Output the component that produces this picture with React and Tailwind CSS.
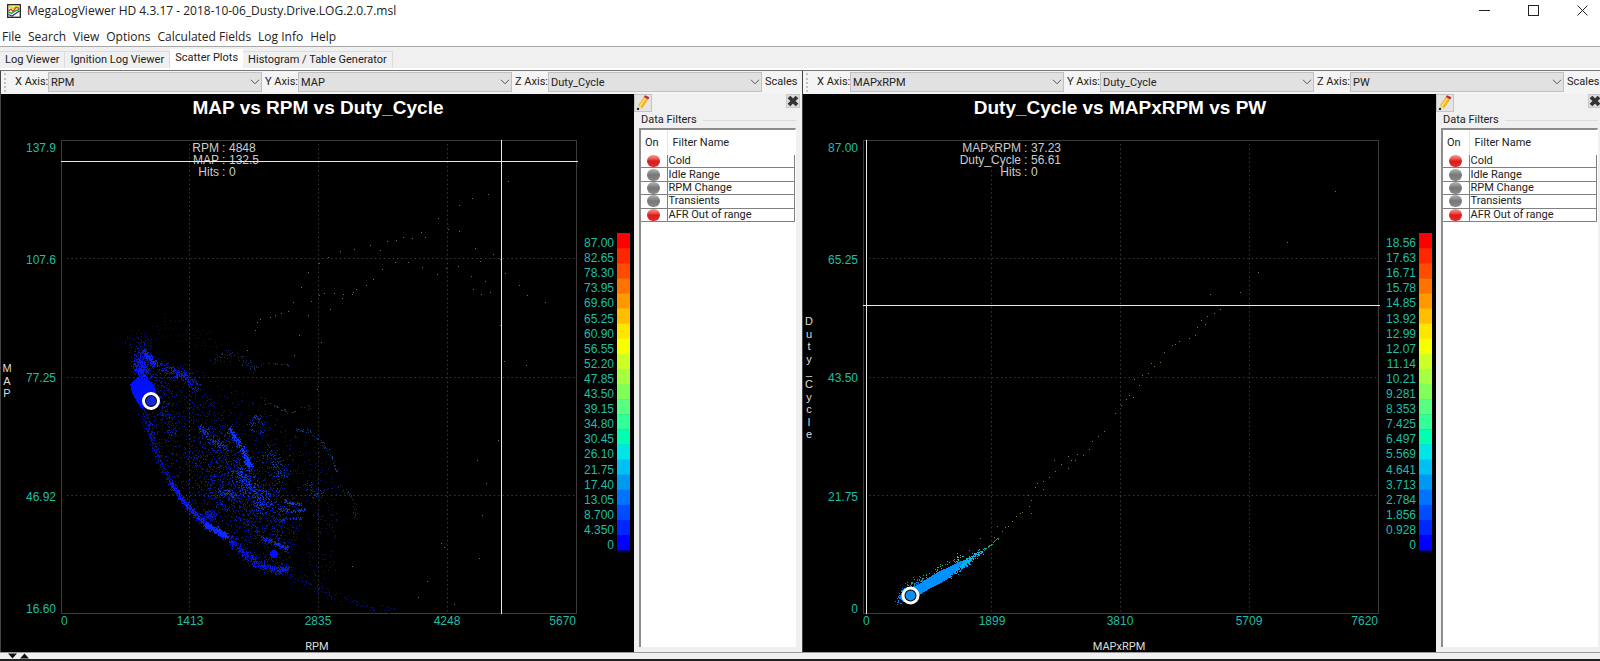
import React from "react";

const menus = ["File", "Search", "View", "Options", "Calculated Fields", "Log Info", "Help"];
const tabs = ["Log Viewer", "Ignition Log Viewer", "Scatter Plots", "Histogram / Table Generator"];

const filters = [
  { name: "Cold", on: true },
  { name: "Idle Range", on: false },
  { name: "RPM Change", on: false },
  { name: "Transients", on: false },
  { name: "AFR Out of range", on: true },
];

const scaleColors = [
  "#ff0000", "#ff2600", "#ff4c00", "#ff7300", "#ff9900", "#ffbf00", "#ffe600",
  "#f7ff00", "#ccff26", "#a6ff40", "#80ff59", "#59ff80", "#33ff99", "#00ffb3",
  "#00e6e6", "#00bff2", "#0099f2", "#0073ff", "#004cff", "#0026ff", "#0000ff",
];

/* ---------- point generation ---------- */

const makeRandom = (seed) => () => {
  seed = (seed * 1664525 + 1013904223) % 4294967296;
  return seed / 4294967296;
};

const spread = (rnd) => rnd() + rnd() + rnd() - 1.5;

const dot = (x, y) => `M${Math.round(x)} ${Math.round(y)}h1v1h-1z`;

// points scattered around a polyline
const trail = (rnd, pts, count, width) => {
  const out = [];
  const lengths = pts.slice(1).map((p, i) => Math.hypot(p[0] - pts[i][0], p[1] - pts[i][1]));
  const total = lengths.reduce((a, b) => a + b, 0);
  for (let n = 0; n < count; n++) {
    let d = rnd() * total;
    let i = 0;
    while (i < lengths.length - 1 && d > lengths[i]) d -= lengths[i++];
    const t = d / lengths[i];
    const x = pts[i][0] + (pts[i + 1][0] - pts[i][0]) * t;
    const y = pts[i][1] + (pts[i + 1][1] - pts[i][1]) * t;
    out.push(dot(x + spread(rnd) * width, y + spread(rnd) * width));
  }
  return out.join("");
};

const inside = (x, y, poly) => {
  let hit = false;
  for (let i = 0, j = poly.length - 1; i < poly.length; j = i++) {
    const [xi, yi] = poly[i];
    const [xj, yj] = poly[j];
    if (yi > y !== yj > y && x < ((xj - xi) * (y - yi)) / (yj - yi) + xi) hit = !hit;
  }
  return hit;
};

const fill = (rnd, poly, count) => {
  const xs = poly.map((p) => p[0]);
  const ys = poly.map((p) => p[1]);
  const [x0, x1] = [Math.min(...xs), Math.max(...xs)];
  const [y0, y1] = [Math.min(...ys), Math.max(...ys)];
  const out = [];
  while (out.length < count) {
    const x = x0 + rnd() * (x1 - x0);
    const y = y0 + rnd() * (y1 - y0);
    if (inside(x, y, poly)) out.push(dot(x, y));
  }
  return out.join("");
};

/* ---------- MAP vs RPM ---------- */

const r1 = makeRandom(7);

const mapCloud = [
  // body of the cloud
  ["#081890", fill(r1, [[147, 272], [185, 276], [207, 304], [232, 335], [262, 366], [284, 392], [305, 412], [297, 440], [285, 472], [255, 466], [212, 428], [186, 404], [166, 372], [144, 320]], 1300)],
  ["#0a24b4", fill(r1, [[200, 330], [232, 337], [262, 380], [290, 425], [278, 455], [230, 425], [190, 385]], 500)],
  ["#08186e", fill(r1, [[180, 268], [230, 290], [270, 320], [318, 352], [338, 400], [330, 440], [300, 400], [250, 350], [210, 310]], 300)],
  ["#0b1c90", trail(r1, [[142, 250], [148, 275], [160, 300], [164, 325], [175, 340]], 220, 9)],
  ["#0a18a0", trail(r1, [[205, 372], [225, 380], [240, 400], [250, 430]], 220, 18)],
  // idle area
  ["#0818e0", trail(r1, [[138, 256], [138, 266], [140, 280]], 200, 8)],
  ["#0818f0", trail(r1, [[138, 270], [141, 275], [141, 284]], 200, 6)],
  ["#0820ff", trail(r1, [[143, 257], [147, 263], [154, 270]], 150, 3)],
  ["#060e80", trail(r1, [[126, 246], [138, 242], [150, 252]], 50, 8)],
  ["#0c20d0", trail(r1, [[150, 268], [175, 278], [190, 285]], 150, 6)],
  ["#0a1cc0", trail(r1, [[172, 275], [186, 284], [198, 298]], 110, 5)],
  // lower edge
  ["#0612b0", trail(r1, [[142, 318], [150, 342], [159, 366], [169, 388], [182, 407], [196, 422], [209, 433]], 480, 4)],
  ["#0a1cff", trail(r1, [[169, 388], [182, 407], [196, 422], [209, 433], [226, 443]], 380, 3)],
  ["#0814e0", trail(r1, [[226, 443], [243, 458], [259, 471], [274, 476], [286, 476]], 420, 5)],
  ["#0c28ff", trail(r1, [[205, 431], [214, 435], [226, 442]], 320, 3)],
  ["#0814b0", trail(r1, [[206, 420], [212, 422]], 130, 5)],
  ["#0a1080", trail(r1, [[286, 478], [312, 492], [340, 505], [362, 512], [392, 516]], 110, 5)],
  // streaks
  ["#0a38ff", trail(r1, [[228, 334], [240, 353], [249, 373]], 190, 3)],
  ["#0a38ff", trail(r1, [[245, 364], [249, 372]], 60, 3)],
  ["#0a30d0", trail(r1, [[198, 332], [212, 346], [226, 355]], 110, 4)],
  ["#0a34e8", trail(r1, [[236, 376], [246, 390], [266, 412]], 280, 9)],
  ["#0c38c0", trail(r1, [[216, 398], [226, 398], [236, 402]], 60, 4)],
  ["#0c3ce0", trail(r1, [[283, 406], [291, 409], [300, 410]], 50, 2)],
  ["#0c3cc0", trail(r1, [[278, 415], [294, 417], [304, 415]], 50, 2)],
  ["#0a28d0", trail(r1, [[278, 428], [285, 424], [300, 424]], 45, 1)],
  ["#0a28f0", trail(r1, [[262, 444], [272, 448], [286, 454]], 90, 2)],
  ["#0a1ed8", trail(r1, [[262, 472], [275, 474], [288, 474]], 90, 3)],
  ["#0c34a8", trail(r1, [[250, 335], [254, 322], [259, 325], [262, 338]], 50, 4)],
  ["#0c349c", trail(r1, [[264, 358], [276, 370], [280, 385], [272, 390]], 140, 10)],
  // outer arcs
  ["#103c80", trail(r1, [[295, 336], [309, 337], [321, 348], [330, 362], [336, 378]], 64, 2)],
  ["#0e3070", trail(r1, [[336, 391], [347, 398], [354, 411], [354, 424]], 38, 3)],
  ["#103c84", trail(r1, [[304, 392], [308, 390], [314, 402], [322, 398]], 40, 5)],
  ["#142c60", trail(r1, [[209, 268], [226, 258], [240, 266], [255, 275]], 60, 5)],
  ["#142c60", trail(r1, [[252, 274], [266, 269], [289, 271]], 24, 1)],
  ["#1c3c50", trail(r1, [[259, 303], [276, 313], [290, 319], [299, 314], [310, 312]], 34, 2)],
  ["#141c60", fill(r1, [[310, 400], [334, 405], [338, 470], [330, 495], [300, 485]], 70)],
  ["#10163c", trail(r1, [[150, 245], [170, 228], [200, 246], [230, 262]], 50, 12)],
];

const mapStrays = [
  [288, 11], [268, 24], [252, 28], [239, 35], [218, 48], [201, 62], [205, 67], [192, 68], [183, 67], [176, 70],
  [167, 71], [160, 80], [150, 75], [134, 79], [120, 81], [108, 87], [99, 93], [228, 59], [239, 61], [255, 78],
  [260, 91], [273, 84], [280, 89], [285, 103], [299, 115], [307, 125], [325, 132], [251, 106], [265, 111],
  [253, 119], [261, 124], [270, 122], [238, 96], [226, 98], [217, 104], [202, 97], [188, 92], [175, 92],
  [162, 99], [153, 109], [146, 115], [136, 119], [133, 122], [132, 124], [123, 124], [114, 123], [104, 123],
  [99, 125], [122, 128], [110, 139], [91, 131], [88, 145], [81, 117], [88, 102], [73, 132], [68, 141],
  [61, 143], [55, 145], [50, 147], [40, 149], [37, 152], [35, 160], [79, 165], [74, 185], [27, 180],
  [101, 172], [97, 219], [280, 155], [284, 191], [306, 195], [278, 270], [257, 290], [266, 313], [262, 345],
  [221, 373], [224, 377], [259, 388], [207, 411], [198, 427], [234, 434], [132, 396],
];

/* ---------- Duty_Cycle vs MAPxRPM ---------- */

const r2 = makeRandom(31);

const dutyCloud = [
  ["#0878f0", trail(r2, [[96, 506], [104, 496], [118, 488]], 200, 5)],
  ["#00a0fc", trail(r2, [[130, 487], [150, 476], [163, 469]], 400, 4)],
  ["#00b8e8", trail(r2, [[158, 471], [165, 466], [178, 457]], 170, 3)],
  ["#20a878", trail(r2, [[108, 489], [128, 479], [142, 471], [154, 464]], 45, 3)],
  ["#18c8a0", trail(r2, [[150, 468], [155, 463], [163, 463]], 18, 3)],
  ["#20a060", trail(r2, [[178, 458], [188, 450], [196, 443]], 28, 1)],
];

const dutyStrays = [
  [177, 444], [166, 456], [191, 443], [199, 437], [202, 433], [205, 432], [194, 432], [209, 427], [213, 422],
  [217, 419], [219, 418], [226, 412], [228, 419], [225, 401], [228, 406], [240, 387], [234, 389], [232, 393],
  [240, 395], [246, 383], [252, 377], [258, 370], [265, 374], [251, 366], [272, 366], [274, 360], [265, 362],
  [280, 361], [286, 355], [289, 347], [295, 342], [301, 337], [312, 319], [318, 311], [323, 305], [330, 303],
  [336, 291], [339, 281], [345, 279], [351, 272], [357, 268], [361, 258], [369, 251], [376, 247], [392, 241],
  [394, 233], [402, 230], [404, 222], [411, 219], [417, 215], [407, 200], [437, 198], [455, 178], [484, 148],
  [532, 97], [331, 285], [348, 269], [372, 250], [386, 244], [398, 226], [326, 301], [268, 366],
];

/* ---------- chart ---------- */

const gridX = [188, 317, 446];
const gridY = [164, 283, 401];

const ScatterChart = ({ plot }) => (
  <svg
    viewBox="0 0 633 558"
    className="block w-full h-full"
    role="img"
    aria-label={plot.title}
    fontFamily="'Liberation Sans', Arial, sans-serif"
    fontSize="12"
  >
    <text x="317" y="20" textAnchor="middle" fontSize="19" fontWeight="700" fill="#fff">
      {plot.title}
    </text>

    {/* grid */}
    <g stroke="#3c3c3c" strokeDasharray="1.4 3" fill="none">
      {gridX.map((x) => (
        <line key={x} x1={x + 0.5} x2={x + 0.5} y1="50" y2="519" />
      ))}
      {gridY.map((y) => (
        <line key={y} y1={y + 0.5} y2={y + 0.5} x1="66" x2="576" />
      ))}
    </g>
    <rect x="60.5" y="46.5" width="515" height="473" fill="none" stroke="#3c3c3c" />

    {/* samples */}
    <g shapeRendering="crispEdges">
      {plot.cloud.map(([color, d], i) => (
        <path key={i} d={d} fill={color} />
      ))}
      <path d={plot.solid} fill={plot.solidColor} />
      <path d={plot.strays.map(([x, y]) => dot(x, y)).join("")} fill={plot.strayColor} />
    </g>

    {/* axis values */}
    <g fill="#1cbfa8">
      {plot.yTicks.map((t, i) => (
        <text key={t} x="55" y={[58, 170, 288, 407, 519][i]} textAnchor="end">
          {t}
        </text>
      ))}
      {plot.xTicks.map((t, i) => (
        <text
          key={t}
          x={[60, 189, 317, 446, 575][i]}
          y="531"
          textAnchor={["start", "middle", "middle", "middle", "end"][i]}
        >
          {t}
        </text>
      ))}
      {plot.zTicks.map((t, i) => (
        <text key={t} x="613" y={153 + Math.round(i * 15.1)} textAnchor="end">
          {t}
        </text>
      ))}
    </g>
    {scaleColors.map((c, i) => (
      <rect key={c} x="616" y={139 + i * 15.1} width="13" height="15.6" fill={c} />
    ))}

    {/* axis names */}
    <g fill="#ddd" fontSize="11" textAnchor="middle">
      <text x="316" y="556" fontFamily="Roboto, sans-serif">
        {plot.xName}
      </text>
      {plot.yName.split("").map((ch, i) => (
        <text key={i} x="6" y={plot.yNameTop + Math.round(i * 12.6)}>
          {ch}
        </text>
      ))}
    </g>

    {/* cursor */}
    <g fill="#ccc">
      {plot.readout.map(([name, value], i) => (
        <React.Fragment key={name}>
          <text x="218" y={58 + i * 12} textAnchor="end">
            {name}
          </text>
          <text x="221" y={58 + i * 12}>:</text>
          <text x="228" y={58 + i * 12}>
            {value}
          </text>
        </React.Fragment>
      ))}
    </g>
    <path d={`M${plot.cursor[0]}.5 46V520M60 ${plot.cursor[1]}.5H577`} stroke="#e8e8e8" fill="none" />

    <circle cx={plot.marker[0]} cy={plot.marker[1]} r="7.5" fill="#000" stroke="#fff" strokeWidth="3" />
    <circle cx={plot.marker[0]} cy={plot.marker[1]} r="5" fill={plot.markerColor} />
  </svg>
);

/* ---------- side panel ---------- */

const PencilIcon = () => (
  <svg viewBox="0 0 16 16" className="w-4 h-4">
    <path d="M3 10.500 8.800 2l4.400 2.500L7.300 13.200z" fill="#f3b61f" />
    <path d="M4.600 11.500 10.500 3" stroke="#ffe07a" strokeWidth="1.400" />
    <path d="M8.800 2 10 .3l4.400 2L13.200 4.500z" fill="#c2242c" />
    <path d="M3 10.500l4.300 2.700-4.800 1.900z" fill="#ead9b8" />
    <circle cx="3" cy="13.900" r="1.200" fill="#222" />
  </svg>
);

const CloseIcon = () => (
  <svg viewBox="0 0 12 12" className="w-3 h-3">
    <path d="M2 2 10 10M10 2 2 10" stroke="#333" strokeWidth="3.800" />
  </svg>
);

const FilterPanel = () => (
  <aside className="w-[168px] shrink-0 flex flex-col bg-[#f0f0f0] pr-1.5">
    <div className="flex items-start justify-between -mr-1">
      <button aria-label="Edit filters" className="border border-[#c4c4c4] bg-[#e4e4e4]">
        <PencilIcon />
      </button>
      <button aria-label="Close" className="border border-[#c8c8c8] bg-[#dcdcdc]">
        <CloseIcon />
      </button>
    </div>

    <div className="flex items-center gap-1.5 h-4 pl-[7px] text-[11px] leading-4">
      <h3>Data Filters</h3>
      <span className="flex-1 h-px bg-[#dcdcdc]" />
    </div>

    <div className="flex-1 mb-[5px] ml-[5px] bg-white border-t-2 border-l-2 border-[#8c8c8c] border-r border-r-white">
      <table className="w-full h-[92px] table-fixed border-collapse text-[11px] leading-3">
        <thead>
          <tr className="h-[25px]">
            <th className="w-[26px] font-normal text-left pl-1 border-r border-[#e4e4e4]">On</th>
            <th className="font-normal text-left pl-[5px]">Filter Name</th>
          </tr>
        </thead>
        <tbody>
          {filters.map(({ name, on }) => (
            <tr key={name} className="border-b border-[#808080]">
              <td className="p-0">
                <input
                  type="checkbox"
                  defaultChecked={on}
                  aria-label={name}
                  className="block mx-auto w-[13px] h-3 appearance-none rounded-full bg-linear-to-b from-[#b4b4b4] via-[#777] to-[#8a8a8a] checked:from-[#f29a98] checked:via-[#dc1a1a] checked:to-[#e02c2c]"
                />
              </td>
              <td className="p-0 pl-px border-x border-[#808080] whitespace-nowrap">{name}</td>
            </tr>
          ))}
        </tbody>
      </table>
    </div>
  </aside>
);

/* ---------- panels ---------- */

const AxisSelect = ({ label, value }) => (
  <>
    <label htmlFor={`${label}-${value}`} className="w-9 shrink-0 pl-[3px] whitespace-nowrap">
      {label} Axis:
    </label>
    <div className="relative flex-1 min-w-0 h-5">
      <select
        id={`${label}-${value}`}
        className="block w-full h-full appearance-none border border-[#c0c0c0] bg-[#e1e1e1] pl-0.5"
      >
        <option>{value}</option>
      </select>
      <svg viewBox="0 0 10 6" className="absolute right-0.5 top-[7px] w-2.5 h-1.5 pointer-events-none">
        <path d="M1 .8 5 4.800 9 .8" fill="none" stroke="#555" />
      </svg>
    </div>
  </>
);

const PlotPanel = ({ plot }) => (
  <section className="flex-1 min-w-0 flex flex-col border-l border-[#444] font-[Roboto,'Noto_Sans',sans-serif]">
    <div className="relative flex items-start h-[23px] shrink-0 pl-[11px] pt-px bg-[#f4f4f4] text-[11px] leading-5">
      <span className="absolute left-[3px] inset-y-0.5 border-l-2 border-dotted border-[#c4c4c4]" />
      {plot.axes.map(([label, value]) => (
        <AxisSelect key={label} label={label} value={value} />
      ))}
      <button className="w-10 shrink-0 pl-[3px] text-left">Scales</button>
    </div>
    <div className="flex-1 min-h-0 flex">
      <div className="flex-1 min-w-0 bg-black">
        <ScatterChart plot={plot} />
      </div>
      <FilterPanel />
    </div>
  </section>
);

const plots = [
  {
    title: "MAP vs RPM vs Duty_Cycle",
    axes: [["X", "RPM"], ["Y", "MAP"], ["Z", "Duty_Cycle"]],
    xName: "RPM",
    yName: "MAP",
    yNameTop: 278,
    xTicks: ["0", "1413", "2835", "4248", "5670"],
    yTicks: ["137.9", "107.6", "77.25", "46.92", "16.60"],
    zTicks: [
      "87.00", "82.65", "78.30", "73.95", "69.60", "65.25", "60.90", "56.55", "52.20", "47.85", "43.50",
      "39.15", "34.80", "30.45", "26.10", "21.75", "17.40", "13.05", "8.700", "4.350", "0",
    ],
    readout: [["RPM", "4848"], ["MAP", "132.5"], ["Hits", "0"]],
    cursor: [500, 67],
    marker: [150, 307],
    markerColor: "#1428d8",
    solid:
      "M129 290L132 287 136 284 146 285 150 288 154 294 156 300 152 308 146 312 141 315 136 308 131 299zM269 460a4 4 0 1 0 8 0a4 4 0 1 0-8 0z",
    solidColor: "#0010ff",
    cloud: mapCloud,
    strays: mapStrays.map(([x, y]) => [x + 219, y + 76]),
    strayColor: "#6c6c5c",
  },
  {
    title: "Duty_Cycle vs MAPxRPM vs PW",
    axes: [["X", "MAPxRPM"], ["Y", "Duty_Cycle"], ["Z", "PW"]],
    xName: "MAPxRPM",
    yName: "Duty_Cycle",
    yNameTop: 231,
    xTicks: ["0", "1899", "3810", "5709", "7620"],
    yTicks: ["87.00", "65.25", "43.50", "21.75", "0"],
    zTicks: [
      "18.56", "17.63", "16.71", "15.78", "14.85", "13.92", "12.99", "12.07", "11.14", "10.21", "9.281",
      "8.353", "7.425", "6.497", "5.569", "4.641", "3.713", "2.784", "1.856", "0.928", "0",
    ],
    readout: [["MAPxRPM", "37.23"], ["Duty_Cycle", "56.61"], ["Hits", "0"]],
    cursor: [63, 211],
    marker: [107.5, 501.5],
    markerColor: "#0c90f0",
    solid: "M97 504L104 495 115 491 125 484 137 477 146 473 154 469 161 466 158 472 150 479 143 486 138 489 128 494 118 500 108 506 99 507z",
    solidColor: "#0090ff",
    cloud: dutyCloud,
    strays: dutyStrays,
    strayColor: "#68805c",
  },
];

/* ---------- window ---------- */

const AppIcon = () => (
  <svg viewBox="0 0 14 14" className="w-3.5 h-3.5">
    <rect x=".7" y=".7" width="12.600" height="12.600" fill="#fffde0" stroke="#222" strokeWidth="1.300" />
    <path d="M1.800 3.500 4 2.300l2 2.200 3-2 3.500 1" fill="none" stroke="#e8d800" strokeWidth="1.600" />
    <path d="M1.500 7 4 5l2 2.500 3-4 3.500 1" fill="none" stroke="#e02020" strokeWidth="1.200" />
    <path d="M1.500 8 4.500 9.500 8 7l4.500-1.500" fill="none" stroke="#20b040" strokeWidth="1.500" />
    <path d="M1.500 10.500 5 12l3-2 4.500-3" fill="none" stroke="#2030c0" strokeWidth="1.200" />
  </svg>
);

const TitleBar = () => (
  <header className="flex items-center h-[22px] shrink-0 pl-[7px] pr-3">
    <AppIcon />
    <h1 className="flex-1 pl-1.5 text-[12px] leading-5">
      MegaLogViewer HD 4.3.17 - 2018-10-06_Dusty.Drive.LOG.2.0.7.msl
    </h1>
    <div className="flex gap-[38px] pb-0.5">
      <button aria-label="Minimize">
        <svg viewBox="0 0 11 11" className="w-[11px] h-[11px]">
          <path d="M0 5.500h11" stroke="#222" />
        </svg>
      </button>
      <button aria-label="Maximize">
        <svg viewBox="0 0 11 11" className="w-[11px] h-[11px]">
          <rect x=".5" y=".5" width="10" height="10" fill="none" stroke="#222" />
        </svg>
      </button>
      <button aria-label="Close window">
        <svg viewBox="0 0 11 11" className="w-[11px] h-[11px]">
          <path d="m.5.5 10 10m0-10-10 10" stroke="#222" />
        </svg>
      </button>
    </div>
  </header>
);

const App = () => (
  <div className="h-screen flex flex-col overflow-hidden bg-white text-[#222] font-['Open_Sans','Noto_Sans',sans-serif]">
    <TitleBar />

    <nav className="flex items-center h-[25px] shrink-0 gap-[7px] pl-0.5 pt-1.5 text-[12px] border-b border-[#a8a8a8]">
      {menus.map((m) => (
        <button key={m}>{m}</button>
      ))}
    </nav>

    <div
      role="tablist"
      className="flex items-end h-[21px] shrink-0 bg-[#f0f0f0] text-[11px] leading-4 font-[Roboto,'Noto_Sans',sans-serif]"
    >
      {tabs.map((t) =>
        t === "Scatter Plots" ? (
          <button key={t} role="tab" aria-selected="true" className="h-[19px] px-[5px] pb-0.5 bg-white">
            {t}
          </button>
        ) : (
          <button key={t} role="tab" aria-selected="false" className="h-[17px] px-[5px] border-t border-r border-[#dcdcdc]">
            {t}
          </button>
        )
      )}
    </div>
    <div className="h-[3px] shrink-0 bg-white border-b border-[#777]" />

    <main className="flex-1 min-h-0 flex -mr-1">
      {plots.map((plot) => (
        <PlotPanel key={plot.title} plot={plot} />
      ))}
    </main>

    <footer className="flex items-center h-[9px] shrink-0 pl-2 bg-[#f0f0f0] border-t border-b-2 border-t-[#999] border-b-[#222]">
      <svg viewBox="0 0 22 6" className="w-[22px] h-1.5">
        <path d="M0 .5h9L4.500 5.500zM12 5.500h9L16.500.5z" fill="#111" />
      </svg>
    </footer>
  </div>
);

export default App;
